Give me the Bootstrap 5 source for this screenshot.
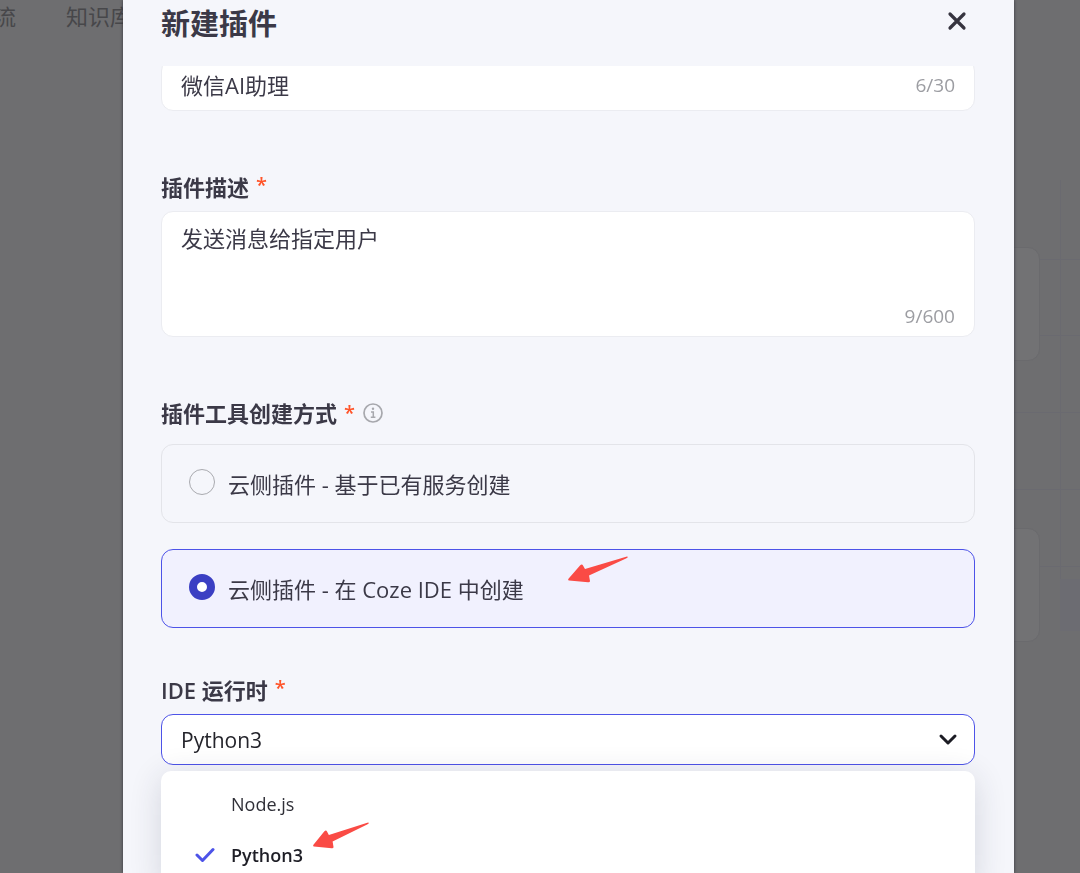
<!DOCTYPE html>
<html lang="zh-CN">
<head>
<meta charset="utf-8">
<meta name="viewport" content="width=device-width, initial-scale=1">
<title>新建插件</title>
<link href="https://cdn.jsdelivr.net/npm/bootstrap@5.3.0/dist/css/bootstrap.min.css" rel="stylesheet">
<style>
  body { font-family: "Open Sans", "Noto Sans CJK SC", sans-serif; font-size: 22px; line-height: 32px; color: #3b3947; background: #6e6e70; }
  /* Dimmed page behind the dialog */
  .backpage { inset: 0; background: #6e6e70; }
  .backpage nav { height: 32px; gap: 50px; margin-left: -28px; }
  .backpage nav a { color: #47474a; }
  .backpage-tiles { width: 200px; margin-right: 40px; margin-top: 215px; gap: 167px; }
  .backpage-tile { height: 114px; border: 1px solid #6a6a6d; border-radius: 12px; background: #727274; }
  .backpage-grid { top: 180px; right: 0; width: 66px; height: 460px; }
  /* Dialog */
  .dialog-frame { padding: 0 66px 0 123px; }
  .dialog-panel { min-height: 100vh; background: #f5f6fb; box-shadow: 0 0 3px #33333e; }
  .dialog-head { height: 66px; padding: 0 39px 0 38px; background: #f5f6fb; }
  .dialog-head h1 { font-size: 29px; line-height: 48px; }
  .close-btn { width: 36px; height: 42px; line-height: 0; }
  .dialog-form { padding: 0 39px 0 38px; margin-top: -7px; }
  .field-box { background: #fff; border: 1px solid #ebecf1; border-radius: 12px; padding: 0 19px; }
  .field-box input, .field-box textarea { color: inherit; background: none; border: 0; outline: 0; padding: 0; resize: none; }
  .name-box { height: 52px; }
  .desc-box { height: 126px; padding-top: 10px; padding-bottom: 4px; }
  .counter { font-size: 19px; color: #9c9da2; }
  .field-title { font-size: 22px; font-weight: 700; line-height: 32px; margin-bottom: 8px; }
  .field-title.semi { font-weight: 600; }
  legend.field-title { margin-bottom: 15px; }
  .star { color: #ff5429; font-size: 20px; line-height: 28px; font-weight: 600; margin-left: 7px; }
  .section-gap { margin-top: 60px; }
  .section-gap-sm { margin-top: 46px; }
  .choice { height: 79px; padding: 0 27px; border: 1px solid #e3e4e9; border-radius: 12px; gap: 13px; }
  .choice.active { background: #f1f1fe; border-color: #4d53e8; }
  .choice input { appearance: none; width: 26px; height: 26px; margin: 0 0 4px; border: 1px solid #a9aaaf; border-radius: 50%; background: transparent; }
  .choice input:checked { border: 8px solid #3b3fc3; background: #fff; }
  .choices { gap: 26px; }
  .runtime { height: 51px; font-size: 21px; color: #24242b; background: #fff; border: 1px solid #4d53e8; border-radius: 12px; padding: 0 19px; appearance: none; outline: 0; }
  .runtime-arrow { right: 17px; top: 15px; pointer-events: none; }
  .runtime-menu { top: 57px; left: 0; right: 0; padding: 7px 0; background: #fff; border-radius: 10px; box-shadow: 0 6px 32px rgba(40, 42, 70, .16); font-size: 18px; }
  .runtime-menu button { height: 51px; padding: 0 34px; border: 0; background: none; color: #303038; }
  .runtime-menu .tick { width: 36px; line-height: 0; }
  .runtime-menu .chosen { font-weight: 600; color: #1e1e26; }
  /* Red pointers sit a little above the line of text that they point at */
  .pointer { flex: none; margin-bottom: 38px; margin-left: 10px; }
  .choice .pointer { margin-left: 31px; }
</style>
</head>
<body class="vh-100 overflow-hidden">

<div class="backpage position-fixed overflow-hidden" aria-hidden="true">
  <nav class="d-flex align-items-center">
    <a href="#" class="text-decoration-none" tabindex="-1">作流</a>
    <a href="#" class="text-decoration-none" tabindex="-1">知识库</a>
  </nav>
  <svg class="backpage-grid position-absolute" viewBox="0 0 66 460" fill="none" stroke="#6a6a70">
    <path d="M0 79.500H66M0 155.500H66M0 232.500H66M0 309.500H66M0 386.500H66M46.500 0V450"/>
    <rect x="46" y="399" width="20" height="52" fill="#6c6c72" stroke="none"/>
  </svg>
  <div class="backpage-tiles position-relative d-flex flex-column ms-auto">
    <div class="backpage-tile"></div>
    <div class="backpage-tile"></div>
  </div>
</div>

<div class="dialog-frame position-relative">
  <main class="dialog-panel" role="dialog" aria-labelledby="dlg-title">
    <header class="dialog-head sticky-top d-flex justify-content-between align-items-start">
      <h1 id="dlg-title" class="fw-bold mb-0">新建插件</h1>
      <button type="button" class="close-btn btn p-0 border-0" aria-label="关闭">
        <svg width="20" height="20" viewBox="0 0 20 20" fill="none" stroke="#36343f" stroke-width="3.200" stroke-linecap="round"><path d="M3 3l14 14M17 3l-14 14"/></svg>
      </button>
    </header>

    <form class="dialog-form">
      <div class="field-box name-box d-flex align-items-center">
        <input class="flex-grow-1" type="text" value="微信AI助理" maxlength="30" aria-label="插件名称">
        <span class="counter">6/30</span>
      </div>

      <div class="section-gap">
        <label class="field-title d-flex" for="desc">插件描述<span class="star">*</span></label>
        <div class="field-box desc-box d-flex flex-column">
          <textarea id="desc" class="flex-grow-1" maxlength="600">发送消息给指定用户</textarea>
          <span class="counter align-self-end">9/600</span>
        </div>
      </div>

      <fieldset class="section-gap">
        <legend class="field-title d-flex align-items-center">插件工具创建方式<span class="star">*</span>
          <svg class="ms-2" width="20" height="20" viewBox="0 0 20 20" fill="none" stroke="#a7a8ad"><circle cx="10" cy="10" r="9" stroke-width="1.700"/><circle cx="10" cy="5.800" r="1.200" fill="#a7a8ad" stroke="none"/><path d="M8 9h2.300v5M7.800 14.200h4.600" stroke-width="1.500"/></svg>
        </legend>
        <div class="choices d-flex flex-column">
          <label class="choice d-flex align-items-center">
            <input type="radio" name="mode"><span>云侧插件 - 基于已有服务创建</span>
          </label>
          <label class="choice active d-flex align-items-center">
            <input type="radio" name="mode" checked><span>云侧插件 - 在 Coze IDE 中创建</span>
            <svg class="pointer" width="60" height="27" viewBox="0 0 60 27" fill="#fa4b45"><path d="M59 .5Q61 1 58 2.500L21 19.500L22 25Q22 26.500 20 26.300L1 24.500Q-.5 24 .7 22.500L12 9.500Q14 7.500 15 9.500L17 13Z"/></svg>
          </label>
        </div>
      </fieldset>

      <div class="section-gap-sm">
        <label class="field-title semi d-flex" for="runtime">IDE 运行时<span class="star">*</span></label>
        <div class="position-relative">
          <select id="runtime" class="runtime w-100 d-block">
            <option>Node.js</option>
            <option selected>Python3</option>
          </select>
          <svg class="runtime-arrow position-absolute" width="20" height="20" viewBox="0 0 20 20" fill="none" stroke="#1c1c24" stroke-width="3" stroke-linecap="round" stroke-linejoin="round"><path d="M3 7l7 7 7-7"/></svg>
          <div class="runtime-menu position-absolute" role="listbox" aria-label="IDE 运行时">
            <button type="button" role="option" aria-selected="false" class="w-100 d-flex align-items-center"><span class="tick"></span>Node.js</button>
            <button type="button" role="option" aria-selected="true" class="chosen w-100 d-flex align-items-center"><span class="tick text-start"><svg width="20" height="16" viewBox="0 0 20 16" fill="none" stroke="#4d53e8" stroke-width="3" stroke-linecap="round" stroke-linejoin="round"><path d="M2 8l5.500 5.500L18 2.500"/></svg></span>Python3
              <svg class="pointer" width="56" height="27" viewBox="0 0 60 27" preserveAspectRatio="none" fill="#fa4b45"><path d="M59 .5Q61 1 58 2.500L21 19.500L22 25Q22 26.500 20 26.300L1 24.500Q-.5 24 .7 22.500L12 9.500Q14 7.500 15 9.500L17 13Z"/></svg>
            </button>
          </div>
        </div>
      </div>
    </form>
  </main>
</div>

<script src="https://cdn.jsdelivr.net/npm/bootstrap@5.3.0/dist/js/bootstrap.bundle.min.js"></script>
</body>
</html>
